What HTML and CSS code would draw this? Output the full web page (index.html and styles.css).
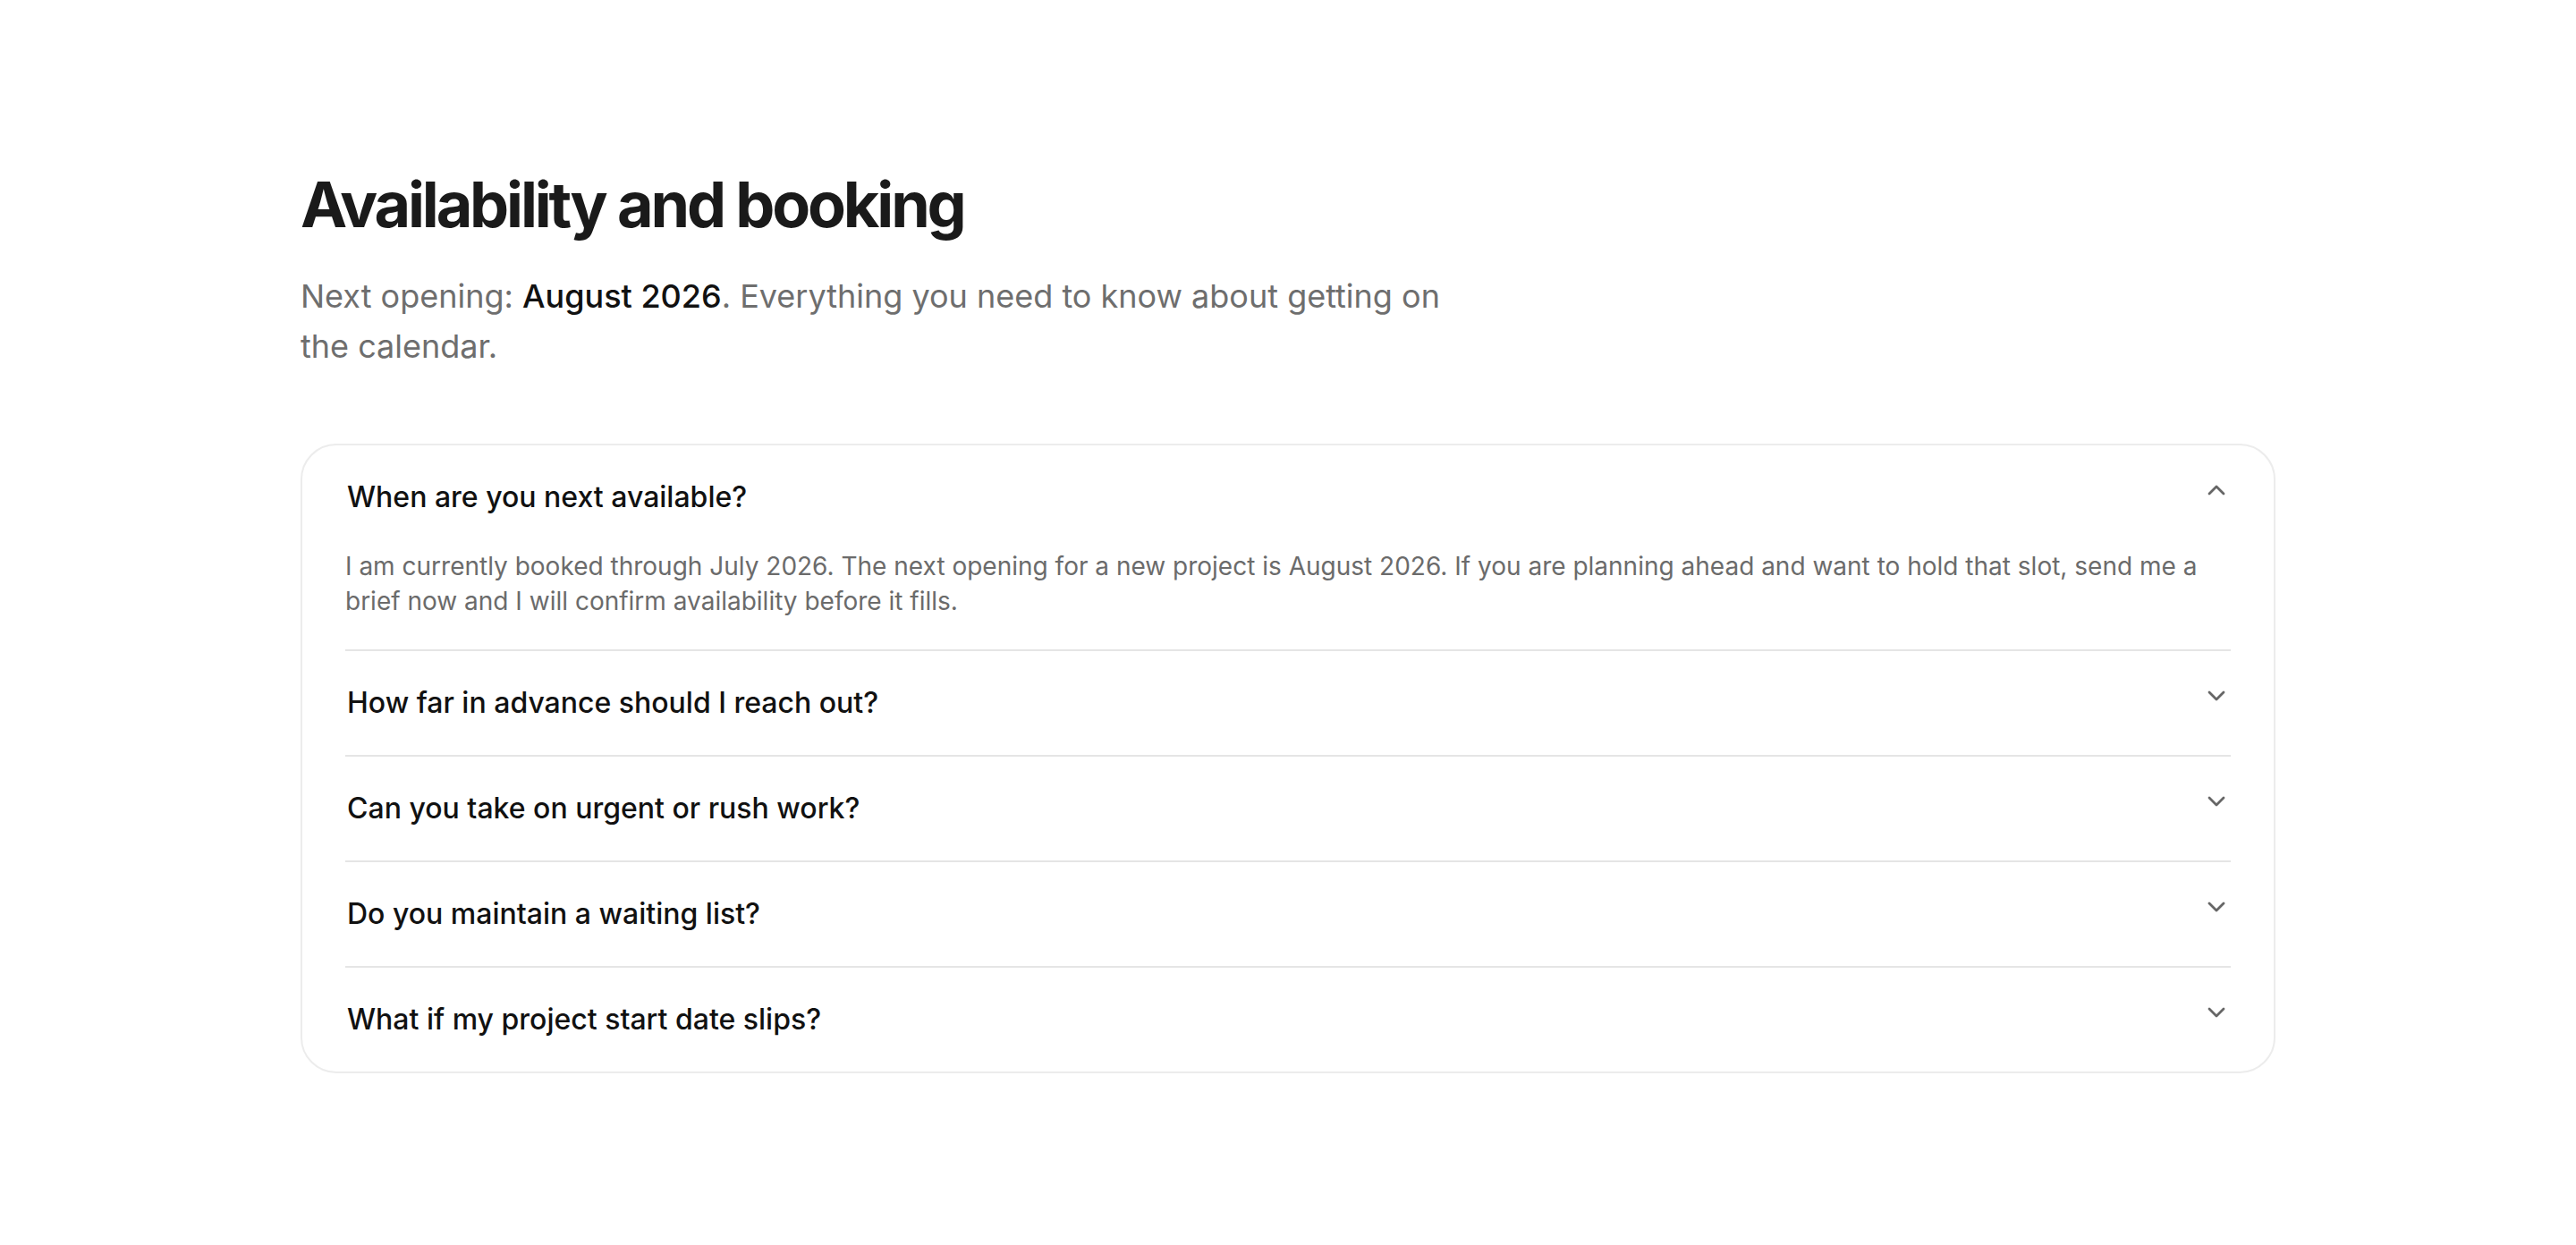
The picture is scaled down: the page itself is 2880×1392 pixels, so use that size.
FILE: index.html
```html
<!DOCTYPE html>
<html lang="en">
<head>
<meta charset="utf-8">
<title>Availability and booking</title>
<link rel="stylesheet" href="styles.css">
</head>
<body>
<main class="page">
  <h1 class="title">Availability and booking</h1>
  <p class="lede">Next opening: <strong>August 2026</strong>. Everything you need to know about getting on the calendar.</p>
  <section class="faq">
    <div class="item open">
      <div class="q">
        <span class="q-text">When are you next available?</span>
        <svg class="chev" viewBox="0 0 24 24"><path d="M6 15l6-6 6 6"/></svg>
      </div>
      <p class="a">I am currently booked through July 2026. The next opening for a new project is August 2026. If you are planning ahead and want to hold that slot, send me a brief now and I will confirm availability before it fills.</p>
    </div>
    <div class="item">
      <div class="q">
        <span class="q-text">How far in advance should I reach out?</span>
        <svg class="chev" viewBox="0 0 24 24"><path d="M6 9l6 6 6-6"/></svg>
      </div>
    </div>
    <div class="item">
      <div class="q">
        <span class="q-text">Can you take on urgent or rush work?</span>
        <svg class="chev" viewBox="0 0 24 24"><path d="M6 9l6 6 6-6"/></svg>
      </div>
    </div>
    <div class="item">
      <div class="q">
        <span class="q-text">Do you maintain a waiting list?</span>
        <svg class="chev" viewBox="0 0 24 24"><path d="M6 9l6 6 6-6"/></svg>
      </div>
    </div>
    <div class="item">
      <div class="q">
        <span class="q-text">What if my project start date slips?</span>
        <svg class="chev" viewBox="0 0 24 24"><path d="M6 9l6 6 6-6"/></svg>
      </div>
    </div>
  </section>
</main>
</body>
</html>
```

FILE: styles.css
```css
* { box-sizing: border-box; }
html, body { margin: 0; padding: 0; background: #ffffff; }
body {
  font-family: Inter, "Noto Sans", "Liberation Sans", sans-serif;
  color: #111111;
}
.page {
  width: 2208px;
  margin: 0 auto;
  padding-top: 190px;
}
.title {
  margin: 0;
  font-size: 70px;
  line-height: 77px;
  font-weight: 700;
  letter-spacing: -0.045em;
  color: #1a1a1a;
}
.lede {
  margin: 37px 0 0;
  max-width: 1300px;
  font-size: 36px;
  line-height: 55.8px;
  color: #6e6e6e;
}
.lede strong {
  font-weight: 500;
  color: #111111;
}
.faq {
  margin-top: 80px;
  border: 2px solid #ececec;
  border-radius: 40px;
  padding: 0 48px;
}
.item {
  padding: 36px 0;
  border-bottom: 2px solid #e5e5e5;
}
.item.open { padding-bottom: 34px; }
.item:last-child { border-bottom: none; }
.q {
  display: flex;
  justify-content: space-between;
  align-items: flex-start;
}
.q-text {
  font-size: 32px;
  line-height: 44px;
  font-weight: 500;
  color: #111111;
  padding-left: 2px;
}
.chev {
  width: 32px;
  height: 32px;
  margin-top: -2px;
  fill: none;
  stroke: #666666;
  stroke-width: 2.1;
  stroke-linecap: round;
  stroke-linejoin: round;
  flex: none;
}
.a {
  margin: 36px 0 0;
  font-size: 28px;
  line-height: 39px;
  color: #6b6b6b;
}
```
